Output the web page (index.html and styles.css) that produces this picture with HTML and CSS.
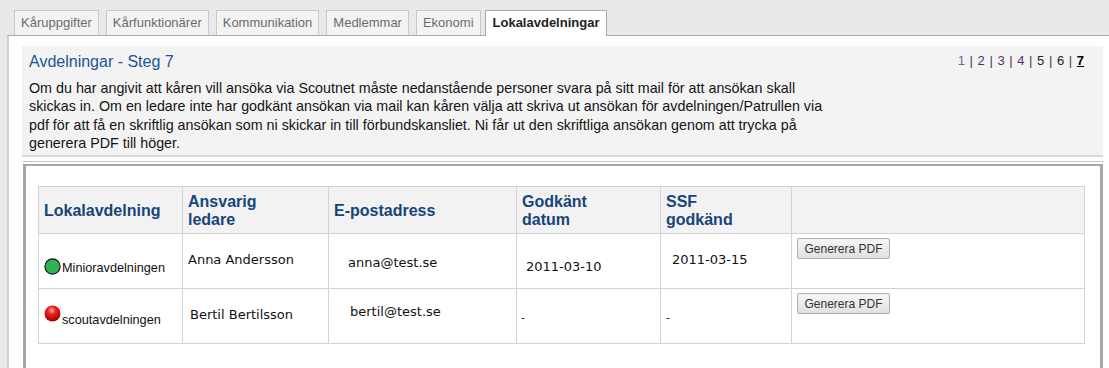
FILE: index.html
```html
<!DOCTYPE html>
<html lang="sv">
<head>
    <meta charset="UTF-8">
    <title>Lokalavdelningar - Steg 7</title>
    <link rel="stylesheet" href="styles.css">
</head>
<body>
    <div class="tabs">
        <a class="tab" href="#">Kåruppgifter</a>
        <a class="tab" href="#">Kårfunktionärer</a>
        <a class="tab" href="#">Kommunikation</a>
        <a class="tab" href="#">Medlemmar</a>
        <a class="tab" href="#">Ekonomi</a>
        <a class="tab active" href="#">Lokalavdelningar</a>
    </div>

    <div class="page">
        <!-- Step info -->
        <div class="info">
            <div class="info-head">
                <h2>Avdelningar - Steg 7</h2>
                <div class="steps">
                    <a class="s1" href="#">1</a> | <a class="s2" href="#">2</a> | <a class="s3" href="#">3</a> | <a class="s3" href="#">4</a> | <a href="#">5</a> | <a href="#">6</a> | <b>7</b>
                </div>
            </div>
            <p>Om du har angivit att kåren vill ansöka via Scoutnet måste nedanstående personer svara på sitt mail för att ansökan skall skickas in. Om en ledare inte har godkänt ansökan via mail kan kåren välja att skriva ut ansökan för avdelningen/Patrullen via pdf för att få en skriftlig ansökan som ni skickar in till förbundskansliet. Ni får ut den skriftliga ansökan genom att trycka på generera PDF till höger.</p>
        </div>

        <!-- Units -->
        <div class="box">
            <table class="units">
                <colgroup>
                    <col style="width: 144px">
                    <col style="width: 146px">
                    <col style="width: 188px">
                    <col style="width: 144px">
                    <col style="width: 131px">
                    <col>
                </colgroup>
                <thead>
                    <tr>
                        <th>Lokalavdelning</th>
                        <th>Ansvarig<br>ledare</th>
                        <th>E-postadress</th>
                        <th>Godkänt<br>datum</th>
                        <th>SSF<br>godkänd</th>
                        <th></th>
                    </tr>
                </thead>
                <tbody>
                    <tr>
                        <td class="unit dn">
                            <svg class="dot" width="17" height="17" viewBox="0 0 17 17"><circle cx="8.5" cy="8.5" r="7.6" fill="#2db553" stroke="#111" stroke-width="1.1"/></svg>Minioravdelningen
                        </td>
                        <td class="txt up">Anna Andersson</td>
                        <td class="txt mail">anna@test.se</td>
                        <td class="txt date dn">2011-03-10</td>
                        <td class="txt date2 up">2011-03-15</td>
                        <td class="act"><button class="btn">Generera PDF</button></td>
                    </tr>
                    <tr>
                        <td class="unit">
                            <svg class="dot ball" width="17" height="17" viewBox="0 0 17 17">
                                <defs>
                                    <radialGradient id="red" cx="0.45" cy="0.3" r="0.7">
                                        <stop offset="0" stop-color="#ffb0b0"/>
                                        <stop offset="0.35" stop-color="#f02020"/>
                                        <stop offset="1" stop-color="#a00000"/>
                                    </radialGradient>
                                </defs>
                                <circle cx="8.5" cy="8.5" r="8" fill="url(#red)"/>
                            </svg>scoutavdelningen
                        </td>
                        <td class="txt name2 up">Bertil Bertilsson</td>
                        <td class="txt mail2 up2">bertil@test.se</td>
                        <td class="txt dash">-</td>
                        <td class="txt dash2">-</td>
                        <td class="act"><button class="btn">Generera PDF</button></td>
                    </tr>
                </tbody>
            </table>
        </div>
    </div>
</body>
</html>
```

FILE: styles.css
```css
body { margin: 0; background: #e9e9e9; font-family: 'Liberation Sans', Arial, sans-serif; font-size: 13px; color: #222; }
a { text-decoration: none; }

.tabs { display: flex; gap: 7px; padding: 10px 0 0 7px; height: 25px; border-bottom: 1px solid #a9a9a9; margin-left: 7px; }
.tab { display: block; height: 24px; line-height: 24px; padding: 0 6px; background: #f3f3f3; border: 1px solid #c9c9c9; border-bottom: none; color: #6b6b6b; }
.tab.active { background: #fff; color: #222; font-weight: bold; border-color: #a9a9a9; height: 25px; margin-bottom: -1px; margin-left: -3px; padding: 0 7px; }

.page { margin-left: 7px; border-left: 2px solid #d0d0d0; background: #fff; padding: 10px 6px 20px 13px; min-height: 320px; }

.info { background: #f3f3f3; padding: 6px 19px 3px 7px; border-bottom: 2px solid #d8d8d8; }
.info-head { display: flex; justify-content: space-between; align-items: flex-start; }
.info h2 { margin: 0; font-size: 16px; font-weight: normal; line-height: 20px; color: #1b5596; }
.steps { font-size: 13px; line-height: 16px; padding-top: 1px; color: #444; word-spacing: 1px; }
.steps a { color: #223; }
.steps .s1 { color: #5a6f96; }
.steps .s2 { color: #2a3d80; }
.steps .s3 { color: #55306e; }
.steps b { color: #000; text-decoration: underline; }
.info p { margin: 7px 0 0; width: 805px; font-size: 14.3px; line-height: 18.3px; color: #141414; }

.box { margin: 7px 0 0 1px; border: 3px solid #a7a7a7; border-top-width: 2px; box-shadow: 0 -2px 0 #fff, 0 -3px 0 #c4c4c4; padding: 20px 12px 30px; }

.units { border-collapse: collapse; width: 1047px; table-layout: fixed; }
.units th, .units td { border: 1px solid #d3d3d3; padding: 0 5px; text-align: left; }
.units th { background: #f2f2f2; height: 45px; font-size: 16px; line-height: 18px; color: #16457a; vertical-align: middle; padding-top: 1px; }
.units tbody tr { height: 55px; }
.units td { vertical-align: middle; }

.unit { font-size: 12.7px; color: #111; white-space: nowrap; }
.dot { vertical-align: -3px; margin-right: 1px; }
.ball { vertical-align: 2px; }
.txt { font-family: 'DejaVu Sans', Verdana, sans-serif; font-size: 13px; color: #111; }
.dn { padding-top: 11px !important; }
.up { padding-bottom: 4px !important; }
.up2 { padding-bottom: 9px !important; }
.mail { padding-left: 19px !important; padding-top: 3px !important; }
.mail2 { padding-left: 21px !important; }
.name2 { padding-left: 7px !important; }
.date { padding-left: 9px !important; }
.date2 { padding-left: 11px !important; }
.dash { font-size: 11px; padding-left: 4px !important; padding-top: 2px !important; }
.dash2 { font-size: 11px; padding-left: 5px !important; padding-top: 2px !important; }
.act { vertical-align: top !important; padding-top: 4px !important; }

.btn { font-family: 'Liberation Sans', Arial, sans-serif; font-size: 12px; color: #333; height: 21px; width: 93px; padding: 0; border: 1px solid #adadad; border-radius: 2px; background: linear-gradient(#f6f6f6, #e1e1e1); }
```
